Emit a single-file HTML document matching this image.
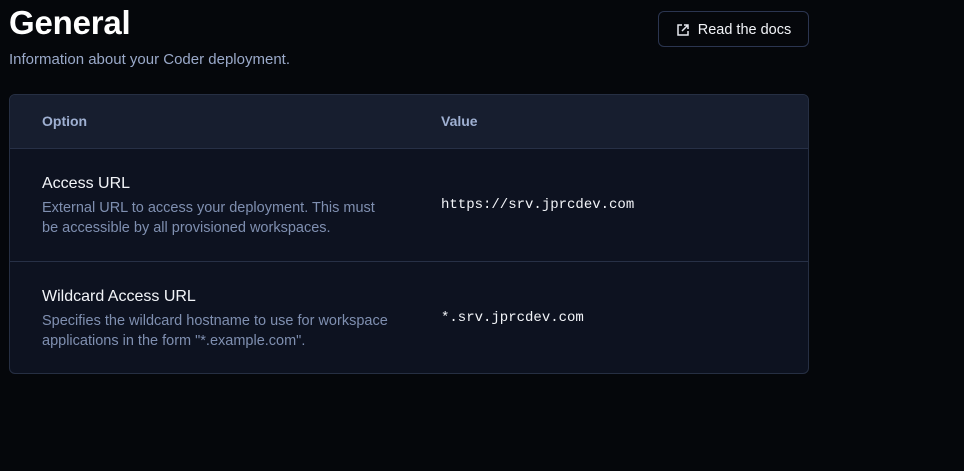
<!DOCTYPE html>
<html><head><style>
*{margin:0;padding:0;box-sizing:border-box}
body{width:964px;height:471px;background:#05070b;font-family:"Liberation Sans",sans-serif;position:relative;overflow:hidden}
h1{position:absolute;left:9px;top:4px;font-size:33px;font-weight:700;color:#fff;letter-spacing:-0.2px}
.sub{position:absolute;left:9px;top:51px;font-size:15px;color:#9aa9c9}
.btn{position:absolute;left:658px;top:11px;width:151px;height:36px;border:1px solid #2b3550;border-radius:6px;color:#f2f4f8;font-size:14.5px;display:flex;align-items:center;justify-content:center;gap:8px;padding-top:1px}
.tbl{position:absolute;left:9px;top:94px;width:800px;height:280px;border:1px solid #262f43;border-radius:6px;overflow:hidden;background:#0d1220}
.hd{height:54px;background:#171e2f;border-bottom:1px solid #273046;position:relative}
.hd span{position:absolute;top:18px;font-size:14px;font-weight:700;color:#9fb0d2}
.row{height:113px;position:relative;border-bottom:1px solid #273046}
.row:last-child{border-bottom:none}
.t{position:absolute;left:32px;top:26px;font-size:16px;color:#f3f5f9}
.d{position:absolute;left:32px;top:49px;width:400px;font-size:14.5px;line-height:20px;color:#7f8fb0;white-space:nowrap}
.v{position:absolute;left:431px;top:48px;font-family:"Liberation Mono",monospace;font-size:14px;color:#f3f5f9}
</style></head><body>
<h1>General</h1>
<div class="sub">Information about your Coder deployment.</div>
<div class="btn"><svg width="14" height="14" viewBox="0 0 14 14" fill="none" stroke="#e6e9ef" stroke-width="1.5"><path d="M6 2H2v10h10V8"/><path d="M8 2h4v4M12 2L6 8"/></svg>Read the docs</div>
<div class="tbl">
<div class="hd"><span style="left:32px">Option</span><span style="left:431px">Value</span></div>
<div class="row"><div class="t">Access URL</div><div class="d">External URL to access your deployment. This must<br>be accessible by all provisioned workspaces.</div><div class="v">https://srv.jprcdev.com</div></div>
<div class="row"><div class="t">Wildcard Access URL</div><div class="d">Specifies the wildcard hostname to use for workspace<br>applications in the form "*.example.com".</div><div class="v">*.srv.jprcdev.com</div></div>
</div>
</body></html>
